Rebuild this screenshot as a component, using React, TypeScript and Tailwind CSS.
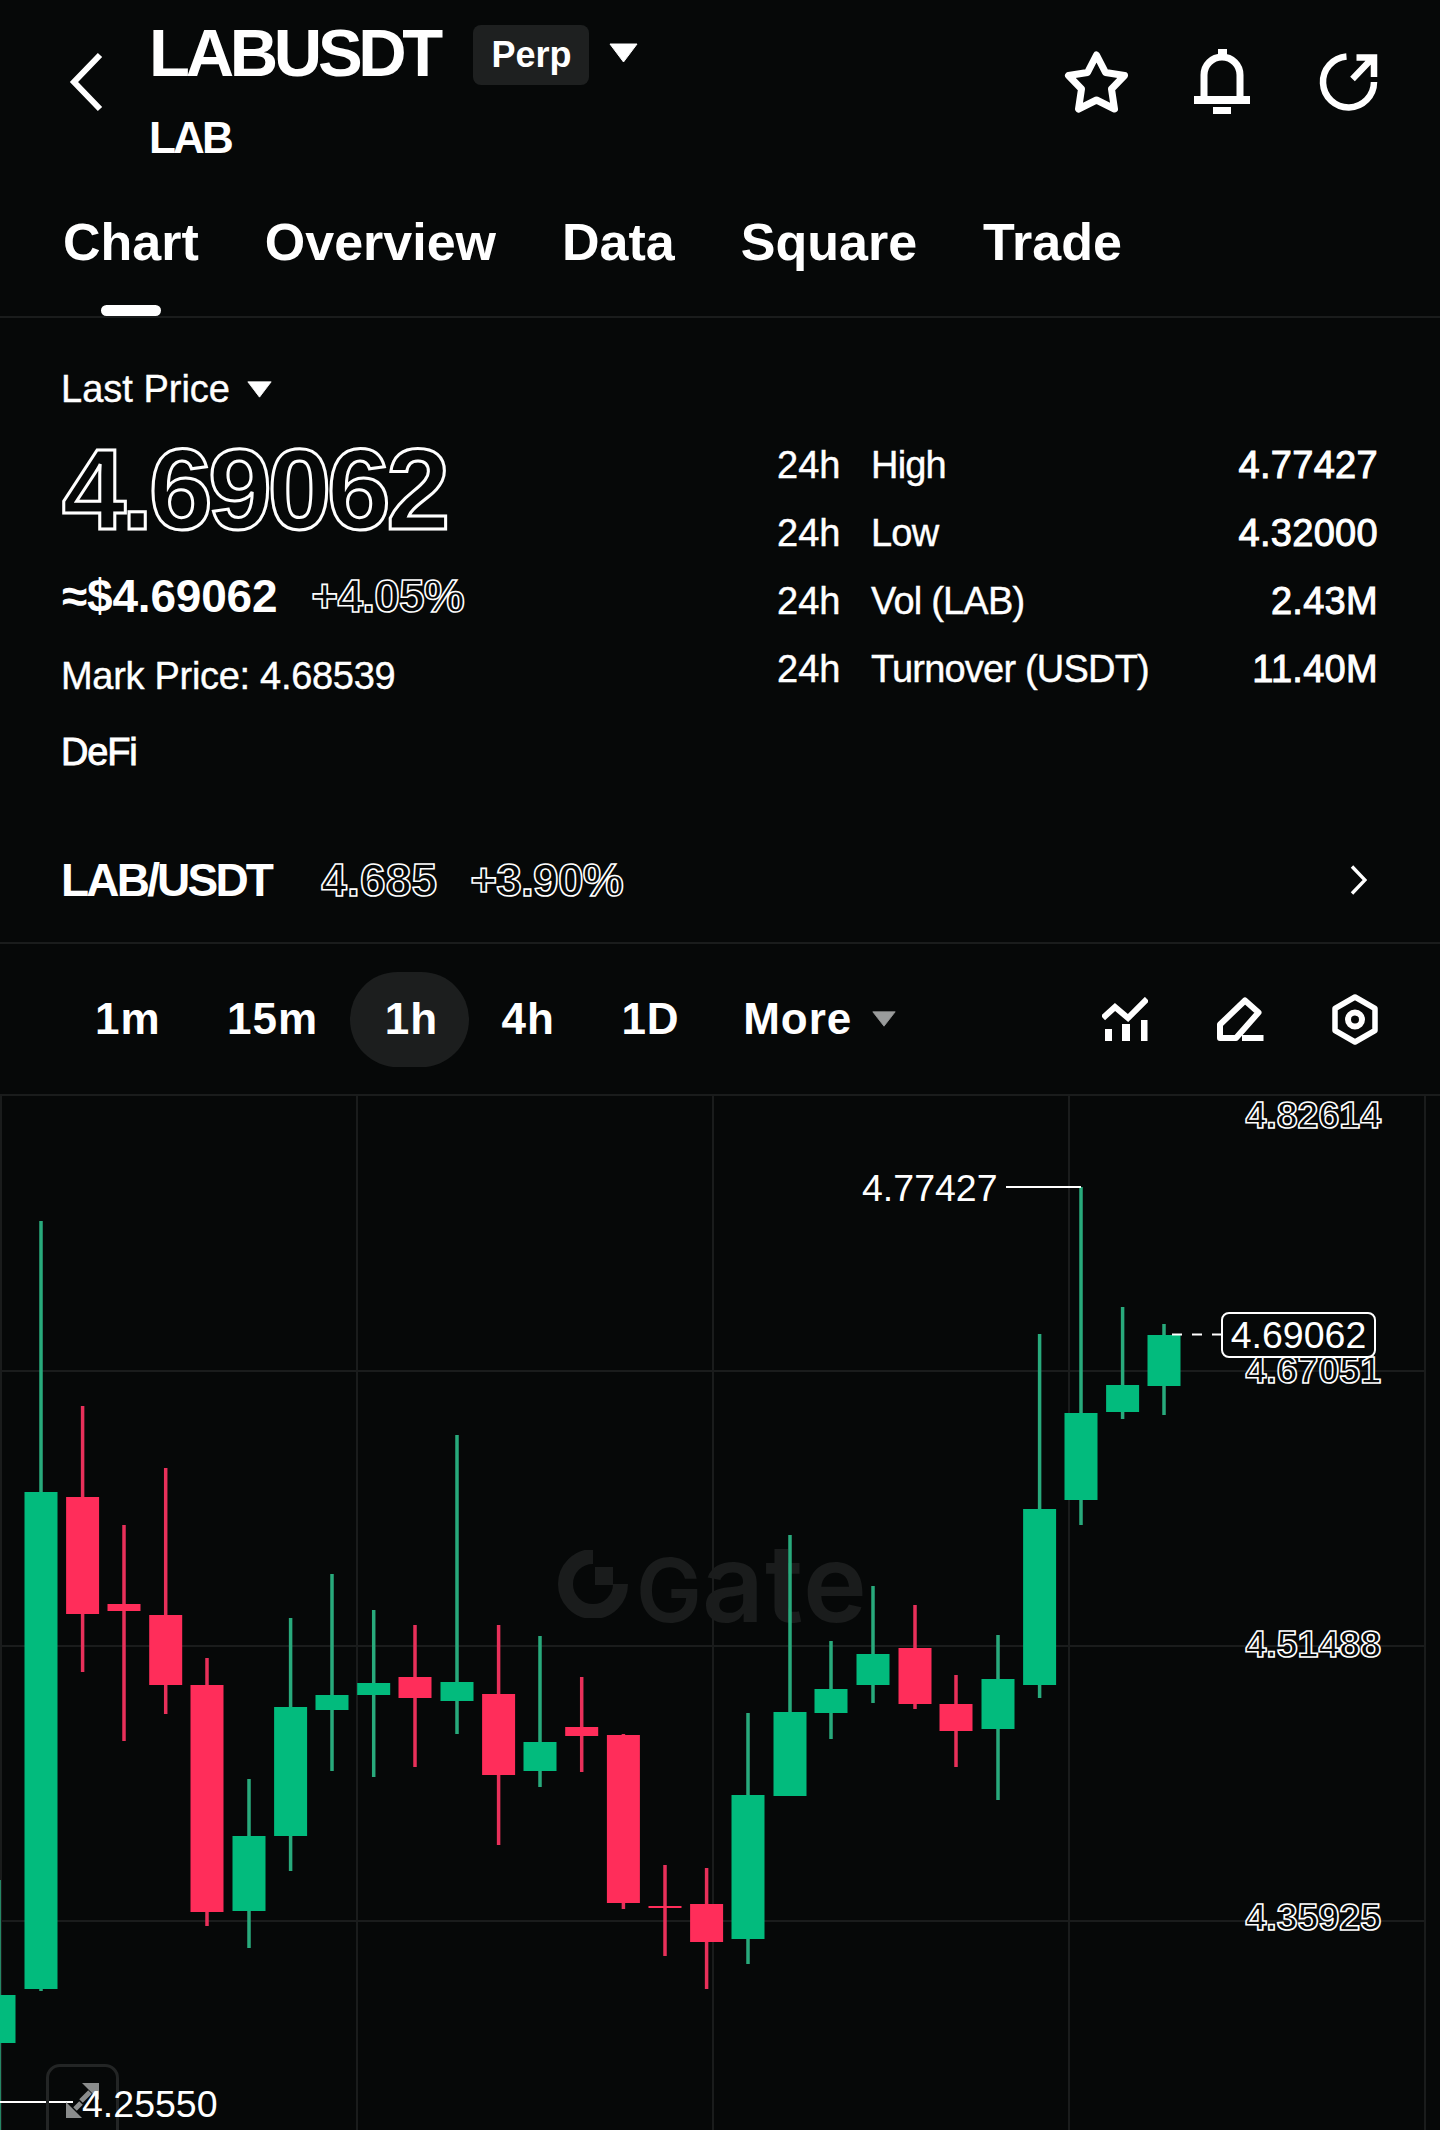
const candles: [number, number, number, number, number, 'g' | 'r'][] = [
  [-1, 1880, 2135, 1995, 2043, 'g'],
  [41, 1221, 1991, 1492, 1989, 'g'],
  [82.6, 1406, 1672, 1497, 1614, 'r'],
  [124, 1525, 1741, 1604, 1611, 'r'],
  [165.7, 1468, 1714, 1615, 1685, 'r'],
  [207, 1658, 1926, 1685, 1912, 'r'],
  [249, 1779, 1948, 1836, 1911, 'g'],
  [290.6, 1618, 1871, 1707, 1836, 'g'],
  [332, 1574, 1771, 1695, 1710, 'g'],
  [373.7, 1610, 1777, 1683, 1695, 'g'],
  [415, 1625, 1767, 1677, 1698, 'r'],
  [457, 1435, 1734, 1682, 1701, 'g'],
  [498.6, 1625, 1845, 1694, 1775, 'r'],
  [540, 1636, 1787, 1742, 1771, 'g'],
  [581.7, 1677, 1772, 1727, 1736, 'r'],
  [623.4, 1734, 1909, 1735, 1903, 'r'],
  [665, 1865, 1956, 1906, 1908, 'r'],
  [706.6, 1868, 1989, 1904, 1942, 'r'],
  [748, 1713, 1964, 1795, 1939, 'g'],
  [790, 1535, 1796, 1712, 1796, 'g'],
  [831, 1641, 1739, 1689, 1713, 'g'],
  [873, 1586, 1703, 1654, 1685, 'g'],
  [915, 1605, 1709, 1648, 1704, 'r'],
  [956, 1675, 1767, 1704, 1731, 'r'],
  [998, 1635, 1800, 1679, 1729, 'g'],
  [1039.6, 1334, 1698, 1509, 1685, 'g'],
  [1081, 1187, 1525, 1413, 1500, 'g'],
  [1122.6, 1307, 1419, 1385, 1412, 'g'],
  [1164, 1324, 1415, 1335, 1386, 'g'],
];

const outline = "font-bold [-webkit-text-stroke:1.6px_white] text-[#060808]";

function Caret({ className, fill = "white" }: { className: string; fill?: string }) {
  return (
    <svg viewBox="0 0 30 20" className={className} preserveAspectRatio="none">
      <path d="M1 1 H29 L15 19 Z" fill={fill} stroke={fill} strokeWidth="1" strokeLinejoin="round" />
    </svg>
  );
}

function Chart() {
  return (
    <svg viewBox="0 1096 1440 1034" className="absolute inset-0 w-full h-full">
      {[0, 356, 712, 1068, 1424].map((x) => (
        <rect key={x} x={x} y={1096} width="2" height="1034" fill="#1a1c1c" />
      ))}
      {[1370, 1645, 1920].map((y) => (
        <rect key={y} x={0} y={y} width="1424" height="2" fill="#1a1c1c" />
      ))}
      {candles.map(([x, hi, lo, top, bot, c], i) => (
        <g key={i}>
          <rect x={x - 1.75} y={hi} width="3.5" height={lo - hi} fill={c === 'g' ? '#28aa7c' : '#e8305a'} />
          <rect x={x - 16.5} y={top} width="33" height={bot - top} fill={c === 'g' ? '#02bb7d' : '#ff2d5a'} />
        </g>
      ))}
      <path d="M1006 1187 H1081" stroke="white" strokeWidth="2" />
      <path d="M1172 1334.5 H1221" stroke="white" strokeWidth="2" strokeDasharray="10 10" />
      <path d="M0 2102 H73" stroke="white" strokeWidth="2" />
    </svg>
  );
}

export default function App() {
  return (
    <div className="w-[1440px] h-[2130px] overflow-hidden bg-[#060808] text-white flex flex-col font-['Liberation_Sans',Arial,sans-serif]">
      {/* top */}
      <div className="h-[318px] border-b-2 border-[#1a1c1c] pt-5 flex flex-col shrink-0">
        <div className="flex items-start h-[138px] pl-[69px] pr-[62px]">
          <svg viewBox="0 0 34 60" className="w-[34px] h-[60px] mt-8" fill="none">
            <path d="M31 3 L5 30 L31 57" stroke="white" strokeWidth="6" />
          </svg>
          <div className="ml-[45px] flex flex-col">
            <div className="flex items-center h-[65px]">
              <span className="text-[67px] font-bold leading-[65px] tracking-[-4.3px] pl-[1px]">LABUSDT</span>
              <span className="ml-[34px] mt-[5px] w-[116px] h-[60px] rounded-[8px] bg-[#1e2020] flex items-center justify-center text-[36px] font-bold pl-[1px]">Perp</span>
              <Caret className="ml-[20px] mt-[1px] w-[29px] h-[20px]" />
            </div>
            <div className="mt-[33px] text-[44px] font-bold leading-[40px] tracking-[-2.8px] pl-[1px]">LAB</div>
          </div>
          <div className="ml-auto flex items-center gap-[65px] mt-[29px]">
            <svg viewBox="0 0 64 62" className="w-[65px] h-[62px]" fill="none">
              <path d="M32 4 L41 21.5 L60 24.5 L47 38 L50 58 L32 49 L14 58 L17 38 L4 24.5 L23 21.5 Z" stroke="white" strokeWidth="7" strokeLinejoin="round" />
            </svg>
            <svg viewBox="0 0 56 65" className="w-[56px] h-[65px] mr-[4px]" fill="none">
              <path d="M10 50 V26 a18 18 0 0 1 36 0 V50" stroke="white" strokeWidth="7" />
              <rect x="0" y="47" width="56" height="8" fill="white" />
              <rect x="24" y="0" width="9" height="8" fill="white" />
              <rect x="19" y="58" width="18" height="7" fill="white" />
            </svg>
            <svg viewBox="0 0 58 58" className="w-[59px] h-[58px]" fill="none">
              <path d="M27 3.5 A25.5 25.5 0 1 0 54.5 29" stroke="white" strokeWidth="6.5" />
              <path d="M33 26 L54 4 M37 4.5 H54.5 V24" stroke="white" strokeWidth="6.5" />
            </svg>
          </div>
        </div>
        <div className="mt-[54px] flex gap-[66px] pl-[63px] h-[60px] items-center text-[52px] font-bold tracking-[0px]">
          <span>Chart</span>
          <span>Overview</span>
          <span>Data</span>
          <span>Square</span>
          <span>Trade</span>
        </div>
        <div className="mt-auto ml-[101px] w-[60px] h-[11px] rounded-full bg-white" />
      </div>

      {/* stats */}
      <div className="flex shrink-0 h-[456px]">
        <div className="w-[715px] pl-[61px]">
          <div className="mt-[49px] h-[44px] flex items-center text-[38px] leading-[44px] [-webkit-text-stroke:0.4px_white]">
            <span>Last Price</span>
            <Caret className="ml-[17px] w-[25px] h-[17px]" />
          </div>
          <div className="mt-[28px] h-[100px] text-[115px] font-bold leading-[100px] tracking-[-4.6px] pl-[1px] [-webkit-text-stroke:3px_white] text-[#060808]">4.69062</div>
          <div className="mt-[32px] h-[50px] flex items-center pl-[1px]">
            <span className="text-[46px] font-bold leading-[50px] tracking-[-0.2px]">≈$4.69062</span>
            <span className={`ml-[34px] text-[46px] leading-[50px] tracking-[-0.8px] ${outline}`}>+4.05%</span>
          </div>
          <div className="mt-[33px] h-[44px] text-[38px] leading-[44px] tracking-[-0.3px] [-webkit-text-stroke:0.4px_white]">Mark Price: 4.68539</div>
          <div className="mt-[32px] h-[44px] text-[38px] leading-[44px] tracking-[-1.2px] [-webkit-text-stroke:0.9px_white]">DeFi</div>
        </div>
        <div className="flex-1 pt-[113px] pr-[62px] pl-[62px] text-[38px] [-webkit-text-stroke:0.4px_white]">
          {[
            ["High", "4.77427"],
            ["Low", "4.32000"],
            ["Vol (LAB)", "2.43M"],
            ["Turnover (USDT)", "11.40M"],
          ].map(([label, value]) => (
            <div key={label} className="h-[68px] flex items-center">
              <span className="w-[94px]">24h</span>
              <span className="tracking-[-0.8px]">{label}</span>
              <span className="ml-auto tracking-[0.3px] [-webkit-text-stroke:1px_white]">{value}</span>
            </div>
          ))}
        </div>
      </div>

      {/* pair row */}
      <div className="h-[170px] shrink-0 border-b-2 border-[#1a1c1c] pt-[81px] pl-[61px] pr-[73px]">
        <div className="flex items-center h-[50px]">
          <span className="text-[46px] font-bold tracking-[-2.8px]">LAB/USDT</span>
          <span className={`ml-[50px] text-[46px] tracking-[0.2px] ${outline}`}>4.685</span>
          <span className={`ml-[33px] text-[46px] tracking-[-0.8px] ${outline}`}>+3.90%</span>
          <svg viewBox="0 0 17 30" className="ml-auto w-[17px] h-[30px]" fill="none">
            <path d="M2 1.5 L15 15 L2 28.5" stroke="white" strokeWidth="3.4" />
          </svg>
        </div>
      </div>

      {/* toolbar */}
      <div className="h-[152px] shrink-0 border-b-2 border-[#1a1c1c] flex items-center pl-[95px] pr-[62px] text-[44px] font-bold tracking-[1px]">
        <div className="flex items-center gap-[66.5px]">
          <span>1m</span>
          <span>15m</span>
          <span className="h-[95px] pl-[35px] pr-[31px] -ml-[35px] -mr-[34px] rounded-[48px] bg-[#1c1e1e] flex items-center">1h</span>
          <span>4h</span>
          <span>1D</span>
          <span className="flex items-center -ml-[3px]">
            More
            <Caret className="ml-[20px] w-[24px] h-[16px]" fill="#9a9c9c" />
          </span>
        </div>
        <div className="ml-auto flex items-center gap-[68px]">
          <svg viewBox="0 0 46 44" className="w-[46px] h-[44px]" fill="none">
            <path d="M1 21 L13 10 L26 21 L45 2" stroke="white" strokeWidth="6" />
            <rect x="3" y="32" width="7" height="12" fill="white" />
            <rect x="20" y="27" width="8" height="17" fill="white" />
            <rect x="39" y="23" width="6.5" height="21" fill="white" />
          </svg>
          <svg viewBox="0 0 48 45" className="w-[48px] h-[45px]" fill="none">
            <path d="M29 3.5 L42.5 15.5 L20 41 H4 V27.5 Z" stroke="white" strokeWidth="6" strokeLinejoin="round" />
            <rect x="26" y="38" width="21.5" height="6" fill="white" />
          </svg>
          <svg viewBox="0 0 46 51" className="w-[46px] h-[51px]" fill="none">
            <path d="M23 3 L43 14.5 V36.5 L23 48 L3 36.5 V14.5 Z" stroke="white" strokeWidth="5.5" strokeLinejoin="round" />
            <circle cx="23" cy="25.5" r="7" stroke="white" strokeWidth="6" />
          </svg>
        </div>
      </div>

      {/* chart */}
      <div className="relative flex-1 overflow-hidden text-[37.5px] leading-[44px]">
        <svg viewBox="0 0 70 68" className="absolute left-[558px] top-[454px] w-[70px] h-[68px]" fill="none">
          <path d="M35 6.5 A27.5 27.5 0 1 0 62.5 34" stroke="#1a1c1c" strokeWidth="15" />
          <rect x="37" y="17" width="18" height="18" fill="#1a1c1c" />
        </svg>
        <div className="absolute left-[636px] top-[432px] h-[110px] flex items-baseline font-['Inter',sans-serif] font-semibold text-[#1a1c1c] leading-[110px]">
          <span className="text-[88px]">G</span>
          <span className="text-[108px] tracking-[1px]">ate</span>
        </div>
        <Chart />
        <span className={`absolute right-[59px] top-[1px] leading-[36px] ${outline}`}>4.82614</span>
        <span className={`absolute right-[59px] top-[252px] ${outline}`}>4.67051</span>
        <span className={`absolute right-[59px] top-[526px] ${outline}`}>4.51488</span>
        <span className={`absolute right-[59px] top-[799px] ${outline}`}>4.35925</span>
        <span className="absolute left-[862px] top-[70px]">4.77427</span>
        <span className="absolute left-[1221px] top-[216px] w-[155px] h-[46px] rounded-[8px] border-2 border-white bg-[#060808] flex items-center justify-center">4.69062</span>
        <div className="absolute left-[46px] top-[968px] w-[73px] h-[100px] rounded-[14px] border-[3px] border-[#232525] flex items-start pl-[17px] pt-[16px]">
          <svg viewBox="0 0 34 35" className="w-[34px] h-[35px]" fill="none">
            <path d="M16 0 H33 V17 Z" fill="#8a8c8c" />
            <path d="M0 19 V35 H16 Z" fill="#8a8c8c" />
            <path d="M24 9 L15 18 M9 26 L15 20" stroke="#8a8c8c" strokeWidth="5" />
          </svg>
        </div>
        <span className="absolute left-[82px] top-[986px]">4.25550</span>
      </div>
    </div>
  );
}
